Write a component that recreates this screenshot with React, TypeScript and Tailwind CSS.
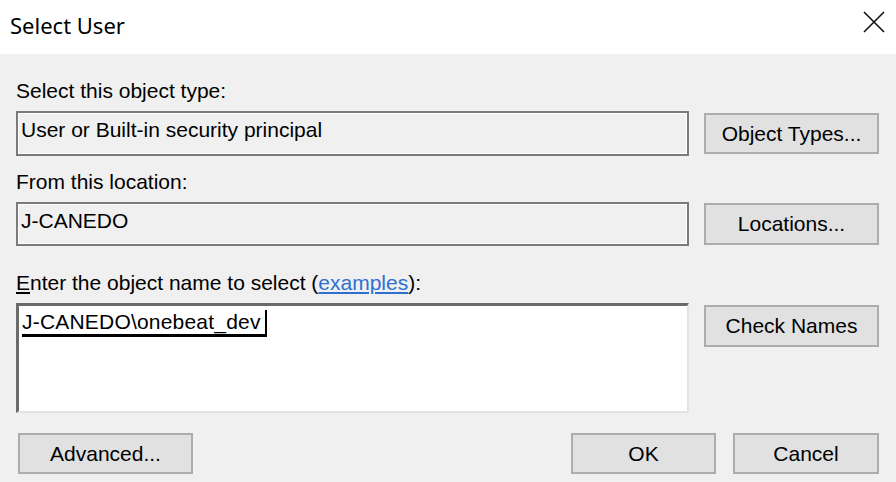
import React from 'react';

const buttonClass =
  'flex items-center justify-center border-2 border-[#adadad] bg-[#e1e1e1] text-[21px] leading-[24px] text-black';

function DialogButton({ label, className = '' }: { label: string; className?: string }) {
  return (
    <button type="button" className={`${buttonClass} ${className}`}>
      {label}
    </button>
  );
}

function ReadonlyBox({ value, className = '' }: { value: string; className?: string }) {
  return (
    <div
      className={`border-2 border-[#7a7a7a] bg-[#f0f0f0] pl-[3px] pt-[5px] text-[21px] leading-[24px] text-black shadow-[inset_0_0_0_1px_#ffffff] ${className}`}
    >
      {value}
    </div>
  );
}

export default function App() {
  return (
    <div className="flex h-[482px] w-[896px] flex-col overflow-hidden bg-[#f0f0f0] font-['Liberation_Sans',Arial,sans-serif] text-black">
      {/* title bar */}
      <div className="flex h-[54px] shrink-0 items-center justify-between bg-white pl-[10px] pr-[11px]">
        <span className="mb-[5px] font-['Noto_Sans',sans-serif] text-[22px] leading-[28px] text-black">Select User</span>
        <svg width="22" height="22" viewBox="0 0 22 22" className="mb-[10px]">
          <path d="M1 1 L21 21 M21 1 L1 21" stroke="#111" strokeWidth="1.6" fill="none" />
        </svg>
      </div>

      <div className="flex flex-col pl-[16px] pr-[17px] pt-[25px]">
        <p className="text-[21px] leading-[24px]">Select this object type:</p>
        <div className="mt-[8px] grid grid-cols-[673px_175px] gap-x-[15px]">
          <ReadonlyBox value="User or Built-in security principal" className="h-[45px]" />
          <DialogButton label="Object Types..." className="mt-[2px] h-[41px]" />
        </div>

        <p className="mt-[14px] text-[21px] leading-[24px]">From this location:</p>
        <div className="mt-[8px] grid grid-cols-[673px_175px] gap-x-[15px]">
          <ReadonlyBox value="J-CANEDO" className="h-[44px]" />
          <DialogButton label="Locations..." className="mt-[1px] h-[42px]" />
        </div>

        <p className="mt-[25px] text-[21px] leading-[24px]">
          <span className="underline underline-offset-2">E</span>nter the object name to select (
          <span className="text-[#2f6fd0] underline underline-offset-2">examples</span>):
        </p>
        <div className="mt-[8px] grid grid-cols-[673px_175px] gap-x-[15px]">
          <div className="h-[110px] border-t-[3px] border-r-2 border-b-2 border-l-[3px] border-t-[#6b6b6b] border-r-[#e3e3e3] border-b-[#e3e3e3] border-l-[#6b6b6b] bg-white pl-[3px] pt-[4px]">
            <span className="inline-block border-r-2 border-b-[3px] border-black pr-[4px] text-[21px] leading-[24px] tracking-[0.2px]">
              J-CANEDO\onebeat_dev
            </span>
          </div>
          <DialogButton label="Check Names" className="mt-[2px] h-[42px]" />
        </div>

        <div className="mt-[20px] flex items-center">
          <DialogButton label="Advanced..." className="ml-[2px] h-[41px] w-[175px]" />
          <div className="ml-auto flex gap-[17px]">
            <DialogButton label="OK" className="h-[41px] w-[145px]" />
            <DialogButton label="Cancel" className="h-[41px] w-[146px]" />
          </div>
        </div>
      </div>
    </div>
  );
}
